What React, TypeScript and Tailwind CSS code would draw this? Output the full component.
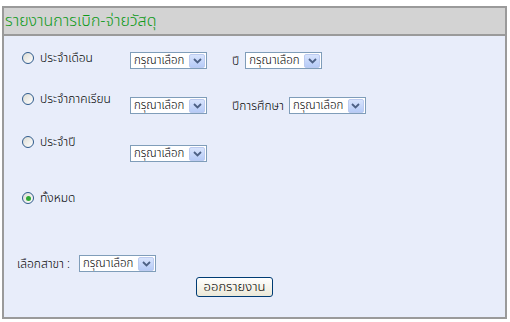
import React from "react";

const font = { fontFamily: "Tahoma, 'Noto Sans Thai', 'Noto Sans', 'DejaVu Sans', sans-serif" };

function Chevron() {
  return (
    <svg width="9" height="6" viewBox="0 0 9 6">
      <path d="M1 1 L4.5 4.5 L8 1" fill="none" stroke="#4d6185" strokeWidth="1.8" />
    </svg>
  );
}

function Select({ w = 77 }: { w?: number }) {
  return (
    <div
      className="flex h-[17px] items-center border border-[#7f9db9] bg-white pl-[3px] pr-[1px] text-[11.5px] font-light leading-none text-black"
      style={{ width: w }}
    >
      <span className="flex-1 whitespace-nowrap">กรุณาเลือก</span>
      <span className="flex h-[14px] w-[16px] items-center justify-center rounded-[2px] border border-[#bccbf0] bg-gradient-to-b from-[#d8e4fd] to-[#b6cbf7]">
        <Chevron />
      </span>
    </div>
  );
}

function Radio({ checked = false }: { checked?: boolean }) {
  return (
    <span className="flex h-[12px] w-[12px] items-center justify-center rounded-full border border-[#2f5b8c] bg-gradient-to-br from-[#dcdcd4] to-white">
      {checked && <span className="h-[5px] w-[5px] rounded-full bg-[#2fa834]" />}
    </span>
  );
}

function RadioLabel({ label, checked = false }: { label: string; checked?: boolean }) {
  return (
    <div className="flex w-[108px] items-center gap-[6px]">
      <Radio checked={checked} />
      <span className="whitespace-nowrap text-[12px] font-light leading-[12px] text-black">{label}</span>
    </div>
  );
}

export default function App() {
  return (
    <div className="h-[322px] w-[510px] bg-white pl-[2px] pt-[6px]" style={font}>
      <div className="flex h-[313px] w-[505px] flex-col border-2 border-[#9a9a9a]">
        <div className="flex h-[28px] items-center border-b-2 border-[#9a9a9a] bg-[#d3d3d3] pl-[1px]">
          <span className="whitespace-nowrap text-[16px] font-light leading-none text-[#0f9a1a]">รายงานการเบิก-จ่ายวัสดุ</span>
        </div>
        <div className="flex flex-1 flex-col bg-[#e8edfa] pl-[18px]">
          {/* Row 1 */}
          <div className="mt-[16px] flex h-[41px] items-start">
            <RadioLabel label="ประจำเดือน" />
            <Select />
            <span className="ml-[25px] mt-[3px] text-[12px] font-light leading-[12px] text-black">ปี</span>
            <div className="ml-[6px]">
              <Select />
            </div>
          </div>
          {/* Row 2 */}
          <div className="flex h-[43px] items-start">
            <RadioLabel label="ประจำภาคเรียน" />
            <div className="mt-[4px]">
              <Select />
            </div>
            <span className="ml-[25px] mt-[7px] text-[12px] font-light leading-[12px] text-black">ปีการศึกษา</span>
            <div className="ml-[5px] mt-[4px]">
              <Select />
            </div>
          </div>
          {/* Row 3 */}
          <div className="flex h-[56px] items-start">
            <RadioLabel label="ประจำปี" />
            <div className="mt-[9px]">
              <Select />
            </div>
          </div>
          {/* Row 4 */}
          <div className="flex h-[63px] items-start">
            <RadioLabel label="ทั้งหมด" checked />
          </div>
          {/* Branch */}
          <div className="-ml-[5px] flex items-center gap-[9px]">
            <span className="whitespace-nowrap text-[12px] font-light leading-[12px] text-black">เลือกสาขา :</span>
            <Select />
          </div>
          <div className="mt-[5px] flex">
            <button className="ml-[174px] h-[20px] w-[77px] rounded-[3px] border border-[#003c74] bg-gradient-to-b from-white to-[#ece9d8] text-[13px] font-light leading-none text-black">
              ออกรายงาน
            </button>
          </div>
        </div>
      </div>
    </div>
  );
}
